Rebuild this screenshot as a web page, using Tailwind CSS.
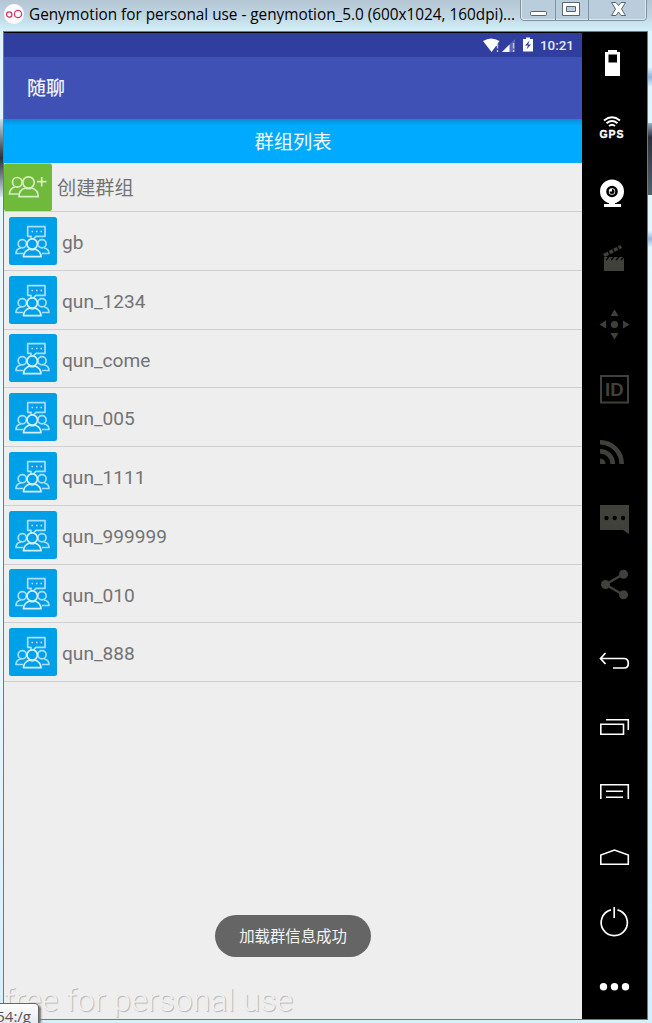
<!DOCTYPE html>
<html lang="zh">
<head>
<meta charset="utf-8">
<title>Genymotion</title>
<script src="https://cdn.jsdelivr.net/npm/@tailwindcss/browser@4"></script>
</head>
<body class="w-[652px] h-[1023px] overflow-hidden relative flex flex-col bg-[#d3f0fb] font-['Roboto','Noto_Sans_CJK_SC',sans-serif]">
<svg class="hidden">
  <symbol id="group" viewBox="0 0 48 48">
    <rect width="48" height="48" rx="2.5" fill="#00a0e9"/>
    <g fill="none" stroke="#a8defa" stroke-width="1.7" stroke-linejoin="round">
      <path d="M18.700 9.700H36V19.300H27L22 24V19.300H18.700Z"/>
      <path d="M14 36.500H7C7 33 9 31.500 12 31M33 36.500H40C40 33 38 31.500 35 31"/>
      <circle cx="13.300" cy="26.800" r="4.100"/><circle cx="33" cy="26.800" r="4.100"/>
      <path stroke="#d5f1fe" fill="#00a0e9" d="M14.500 39.700C14.500 35.500 17.500 33.200 20.500 32Q23.200 33.500 26 32C29 33.200 32 35.500 32 39.700Z"/>
      <circle stroke="#d5f1fe" fill="#00a0e9" cx="23.200" cy="27" r="5.200"/>
    </g>
    <path d="M22.500 14.500h1.500M27 14.500h1.500M31.500 14.500h1.500" stroke="#c5eafb" stroke-width="1.300"/>
  </symbol>
</svg>

<header class="h-[31px] shrink-0 flex items-start bg-linear-to-b from-[#b4c6d4] via-[#c0d5e2] to-[#d2f1fb] pl-1">
  <svg class="w-5 h-5 mt-1 shrink-0" viewBox="0 0 20 20"><circle cx="10" cy="10" r="10" fill="#fff"/><g fill="none" stroke="#dd3468" stroke-width="1.300"><circle cx="5.200" cy="10.500" r="2.700"/><circle cx="14" cy="10" r="3.600"/></g></svg>
  <h1 class="ml-[5px] mt-[3px] w-[488px] leading-6 whitespace-nowrap text-black font-['Open_Sans',sans-serif]"><svg class="w-[488px] h-6" viewBox="0 0 488 24"><text x="0" y="17" font-size="16" textLength="486" lengthAdjust="spacingAndGlyphs">Genymotion for personal use - genymotion_5.0 (600x1024, 160dpi)...</text></svg></h1>
  <svg class="w-[127px] h-[22px] ml-[3px] shrink-0" viewBox="520 0 127 22">
    <path d="M520.500 -1V17Q520.500 20.500 524 20.500H643Q646.500 20.500 646.500 17V-1Z" fill="#b9cddc" stroke="#7f919f"/>
    <path d="M521.500 0V17Q521.500 19.500 524 19.500H643Q645.500 19.500 645.500 17V0" fill="none" stroke="#dde9f1"/>
    <path d="M555.500 0V20M588.500 0V20" stroke="#7f919f"/>
    <rect x="530.500" y="11.500" width="16" height="4" rx="1" fill="#fff" stroke="#5b6470"/>
    <path fill-rule="evenodd" d="M562.500 2.500H579.500V15.500H562.500ZM566.500 6.500V11.500H575.500V6.500Z" fill="#fff" stroke="#5b6470"/>
    <path d="M611.500 2.500H616L618.500 5.500L621 2.500H625.500L621.500 9L625.500 15.500H621L618.500 12L616 15.500H611.500L615.500 9Z" fill="#fff" stroke="#5b6470"/>
  </svg>
</header>

<div class="h-[989px] shrink-0 flex bg-linear-to-b from-[#def5fc] via-[#eefaff] to-[#d3f0fb]">
  <div class="w-[3px] shrink-0 flex flex-col"><div class="mt-[88px] h-[78px] bg-linear-to-b from-[#c5e2ee] via-[#29323b] to-[#d5ecf5]"></div></div>
  <div class="w-[645px] shrink-0 h-[989px] border border-[#777] bg-black flex">
    <main class="w-[578px] mt-px h-[986px] shrink-0 bg-[#eeeeee] flex flex-col text-[#737373]">
      <div class="h-6 shrink-0 bg-[#303f9f] flex">
        <svg class="w-[578px] h-6" viewBox="4 33 578 24">
          <path d="M483 41Q491 36 499.500 41L498 43V46H496L491.500 52Z" fill="#fff"/>
          <path d="M497.500 43v5.500M497.500 50v2" stroke="#bcc1e0" stroke-width="1.400"/>
          <path d="M502 52L515 39V52Z" fill="#5966b2"/><path d="M502 52L509.500 44.500V52Z" fill="#fff"/>
          <path d="M513.500 43v5.500M513.500 50v2" stroke="#bcc1e0" stroke-width="1.400"/>
          <path d="M523 39H526V37.500H530V39H533V51.500H523Z" fill="#fff"/><path d="M529.500 40.500L525 45.500H528L526.500 49.500L531 44.500H528.200Z" fill="#303f9f"/>
          <text x="540" y="50" font-size="13.500" font-weight="500" fill="#e6e8f4" textLength="34" lengthAdjust="spacingAndGlyphs">10:21</text>
        </svg>
      </div>
      <div class="h-[62px] shrink-0 bg-[#3f51b5] text-[#eef0fa] flex items-center pl-[23px] pt-[2px] text-[19px] font-medium">随聊</div>
      <div class="h-11 shrink-0 bg-linear-to-b from-[#078fd5] via-[#00aaff] via-15% to-[#00aaff] flex items-center justify-center text-[#f0faff] text-[19.3px] pt-1">群组列表</div>
      <div class="h-[49px] shrink-0 flex items-center border-b border-[#cfcfcf]">
        <svg class="w-12 h-12 shrink-0" viewBox="0 0 48 48"><rect y=".5" width="48" height="47.500" rx="2" fill="#6fba3b"/><g fill="none" stroke="#d6edc6" stroke-width="1.700"><path d="M37.700 14V23.500M33 18.700H42.500"/><circle cx="13.300" cy="19.300" r="4.800"/><path d="M15.500 31H5.500C5.500 27 8 24.800 11 24"/><circle cx="24.500" cy="19.500" r="5.700" fill="#6fba3b"/><path d="M15 33.700C15 28.500 17.500 26 21.500 25Q24.500 26.500 27.500 25C31.500 26 34.200 28.500 34.200 33.700Z"/></g></svg>
        <span class="ml-[5px] pt-1 text-[19.2px]">创建群组</span>
      </div>
      <ul class="text-[19.1px]">
        <li class="h-[58.75px] border-b border-[#cfcfcf] flex items-center pl-[5px] gap-[5px]"><svg class="w-12 h-12"><use href="#group"/></svg><span class="pt-[5px]">gb</span></li>
        <li class="h-[58.75px] border-b border-[#cfcfcf] flex items-center pl-[5px] gap-[5px]"><svg class="w-12 h-12"><use href="#group"/></svg><span class="pt-[5px]">qun_1234</span></li>
        <li class="h-[58.75px] border-b border-[#cfcfcf] flex items-center pl-[5px] gap-[5px]"><svg class="w-12 h-12"><use href="#group"/></svg><span class="pt-[5px]">qun_come</span></li>
        <li class="h-[58.75px] border-b border-[#cfcfcf] flex items-center pl-[5px] gap-[5px]"><svg class="w-12 h-12"><use href="#group"/></svg><span class="pt-[5px]">qun_005</span></li>
        <li class="h-[58.75px] border-b border-[#cfcfcf] flex items-center pl-[5px] gap-[5px]"><svg class="w-12 h-12"><use href="#group"/></svg><span class="pt-[5px]">qun_1111</span></li>
        <li class="h-[58.75px] border-b border-[#cfcfcf] flex items-center pl-[5px] gap-[5px]"><svg class="w-12 h-12"><use href="#group"/></svg><span class="pt-[5px]">qun_999999</span></li>
        <li class="h-[58.75px] border-b border-[#cfcfcf] flex items-center pl-[5px] gap-[5px]"><svg class="w-12 h-12"><use href="#group"/></svg><span class="pt-[5px]">qun_010</span></li>
        <li class="h-[58.75px] border-b border-[#cfcfcf] flex items-center pl-[5px] gap-[5px]"><svg class="w-12 h-12"><use href="#group"/></svg><span class="pt-[5px]">qun_888</span></li>
      </ul>
    </main>
    <aside class="w-[65px] shrink-0 bg-black flex flex-col text-white">
      <svg class="w-[65px] h-[65px]" viewBox="582 32 65 65"><path fill-rule="evenodd" fill="#fff" d="M605 52H608V50H617V52H620V76H605ZM608.500 54.500V62.500H617V54.500Z"/></svg>
      <svg class="w-[65px] h-[65px]" viewBox="582 97 65 65"><g fill="none" stroke="#fff" stroke-width="1.900"><path d="M604 120.500Q612 114 620 120.500M606.500 123.300Q612 118.800 617.500 123.300M609 126Q612 123.500 615 126"/></g><text x="599.500" y="138" fill="#fff" font-family="Liberation Sans" font-weight="700" font-size="10.500" stroke="#fff" stroke-width=".3" textLength="24">GPS</text></svg>
      <svg class="w-[65px] h-[65px]" viewBox="582 162 65 65"><circle cx="612" cy="191.500" r="12" fill="#fff"/><path d="M609 201h6v3h6v3h-17v-3h5z" fill="#fff"/><circle cx="612" cy="191.500" r="4.500" fill="#fff" stroke="#000" stroke-width="2.600"/><path d="M612 191.500V189A2.500 2.500 0 1 1 609.500 191.500Z" fill="#000"/></svg>
      <svg class="w-[65px] h-[65px]" viewBox="582 227 65 65"><path d="M604 257H624V271H604Z" fill="#41413c"/><path d="M603 254L620.500 245L622 248L605 257Z" fill="#41413c"/><path d="M606 260l3-3M611 260l3-3M616 260l3-3M621 260l3-3M608 251l2 4M612.500 248.500l2 4M617 246l2 4" stroke="#000" stroke-width="1.300"/></svg>
      <svg class="w-[65px] h-[65px]" viewBox="582 292 65 65"><path fill="#41413c" d="M614.500 309.500L618.500 316H610.500ZM614.500 339.500L618.500 333H610.500ZM599.500 324.500L606 320.500V328.500ZM629.500 324.500L623 320.500V328.500Z"/><circle cx="614.500" cy="324.500" r="3.600" fill="#41413c"/></svg>
      <svg class="w-[65px] h-[65px]" viewBox="582 357 65 65"><rect x="601" y="376" width="27" height="26.500" fill="none" stroke="#41413c" stroke-width="2"/><text x="605" y="396" font-family="Liberation Sans" font-weight="700" font-size="19" fill="#41413c" textLength="18.500" lengthAdjust="spacingAndGlyphs">ID</text></svg>
      <svg class="w-[65px] h-[65px]" viewBox="582 422 65 65"><g fill="none" stroke="#41413c"><path d="M600 442.300A21.700 21.700 0 0 1 621.700 464" stroke-width="4.600"/><path d="M600 451.200A12.800 12.800 0 0 1 612.800 464" stroke-width="4.600"/></g><path d="M600 458.500A5.500 5.500 0 0 1 605.500 464H600Z" fill="#41413c"/></svg>
      <svg class="w-[65px] h-[65px]" viewBox="582 487 65 65"><path d="M600 505H629V534L623 530H600Z" fill="#41413c"/><g fill="#000"><circle cx="606.500" cy="518" r="2.200"/><circle cx="614.700" cy="518" r="2.200"/><circle cx="623" cy="518" r="2.200"/></g></svg>
      <svg class="w-[65px] h-[65px]" viewBox="582 552 65 65"><path d="M623.500 574L605.500 584.500L623.500 595" fill="none" stroke="#41413c" stroke-width="2.200"/><g fill="#41413c"><circle cx="623.500" cy="574.300" r="4.500"/><circle cx="605.500" cy="584.500" r="4.500"/><circle cx="623.500" cy="594.800" r="4.500"/></g></svg>
      <svg class="w-[65px] h-[65px] mt-3" viewBox="582 629 65 65"><path d="M605.500 653L600.500 658.500L605.500 664M600.500 658.500H624Q628.300 658.500 628.300 663.200Q628.300 668 624 668H613" fill="none" stroke="#fff" stroke-width="1.700"/></svg>
      <svg class="w-[65px] h-[65px]" viewBox="582 694 65 65"><path d="M606 719.700H628.300V730M600.800 724.300H623.500V734.200H600.800Z" fill="none" stroke="#fff" stroke-width="1.600"/></svg>
      <svg class="w-[65px] h-[65px]" viewBox="582 759 65 65"><path d="M600.800 799V784.700H628.300V799M606 791.200H623M606 797.200H623" fill="none" stroke="#fff" stroke-width="1.600"/></svg>
      <svg class="w-[65px] h-[65px]" viewBox="582 824 65 65"><path d="M600.800 864.200V855L614.500 850L628.300 855V864.200Z" fill="none" stroke="#fff" stroke-width="1.600"/></svg>
      <svg class="w-[65px] h-[65px]" viewBox="582 889 65 65"><path d="M611 909.900A13.100 13.100 0 1 0 617.500 909.900M614.200 907V918" fill="none" stroke="#fff" stroke-width="1.700"/></svg>
      <svg class="w-[65px] h-[65px]" viewBox="582 954 65 65"><g fill="#fff"><circle cx="603.500" cy="986.700" r="3.700"/><circle cx="614.500" cy="986.700" r="3.700"/><circle cx="625.500" cy="986.700" r="3.700"/></g></svg>
    </aside>
  </div>
  <div class="w-1 flex flex-col"><div class="mt-9 h-5 bg-linear-to-b from-[#def5fc] via-[#8fb5dc] to-[#def5fc]"></div><div class="mt-9 h-[72px] bg-linear-to-b from-[#9db5c3] via-[#29323b] via-20% to-[#53616c]"></div><div class="mt-9 h-4 bg-linear-to-b from-[#def5fc] via-[#9ab5dc] to-[#def5fc]"></div></div>
</div>

<div class="absolute left-[215px] top-[915px] w-[156px] h-[42px] rounded-full bg-[#656565] text-[#f5f5f5] text-[15.4px] flex items-center justify-center pt-[3px]">加载群信息成功</div>
<svg class="absolute left-1 top-[975px] w-[300px] h-11" viewBox="4 975 300 44">
  <text class="[text-shadow:1px_1px_1px_#b5b5b5]" x="4" y="1011" fill="#f0f0f0" font-family="Roboto" font-weight="300" font-size="32" textLength="289">free for personal use</text>
</svg>
<div class="absolute -left-1 top-[1003px] w-[43px] h-6 rounded-tr-sm border border-[#666] bg-linear-to-b from-white to-[#e4e5f0] shadow-[2px_2px_2px_#777] text-[#555] text-[15px] leading-6 font-['Open_Sans',sans-serif] flex justify-end pr-[7px]">54:/g</div>
</body>
</html>
